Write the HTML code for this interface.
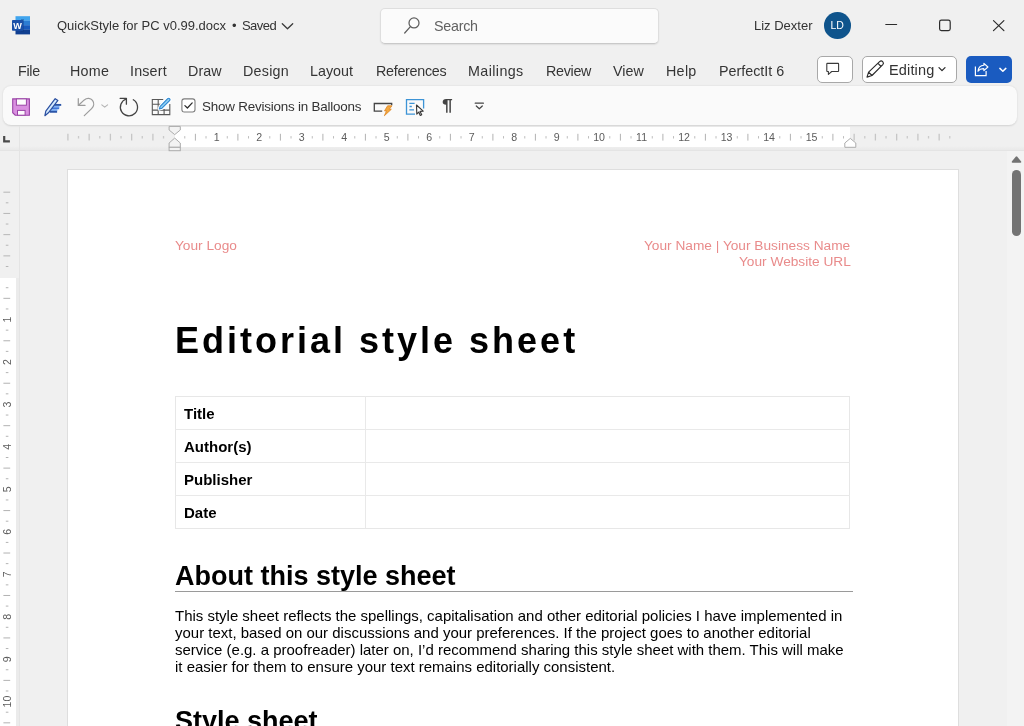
<!DOCTYPE html>
<html lang="en">
<head>
<meta charset="utf-8">
<title>QuickStyle for PC v0.99.docx - Word</title>
<style>
html,body{margin:0;padding:0;}
body>*{will-change:transform;}
body{width:1024px;height:726px;overflow:hidden;position:relative;background:#f0f0f0;font-family:"Liberation Sans",sans-serif;color:#242424;}
.abs{position:absolute;white-space:nowrap;line-height:1;}
svg{position:absolute;overflow:visible;}
/* title bar */
.ttl{font-size:13px;color:#333;}
.menu{font-size:14.3px;color:#353535;top:62.6px;height:16px;line-height:16px;}
#search{position:absolute;left:380px;top:8px;width:277px;height:34px;border:1px solid #dedede;border-bottom-color:#c9c9c9;border-radius:5px;background:#fbfbfb;box-shadow:0 1px 1.5px rgba(0,0,0,0.08);}
.btn{position:absolute;top:56px;height:24.5px;border:1px solid #a8a8a8;border-radius:5px;background:#fff;}
#share{position:absolute;left:966px;top:55.7px;width:46.3px;height:26.7px;border-radius:5px;background:#1a5bc0;}
#qat{position:absolute;left:3px;top:86px;width:1014px;height:38.5px;border-radius:8px;background:#fafafa;box-shadow:0 0.8px 2px rgba(0,0,0,0.13);}
/* rulers */
#rband{position:absolute;left:0;top:146px;width:1024px;height:5px;background:linear-gradient(#f0f0f0,#e7e7e7);}
#hruler{position:absolute;left:175px;top:127px;width:675px;height:20px;background:#fff;}
#vband{position:absolute;left:16px;top:278px;width:3px;height:448px;background:#ebebeb;}
#vruler{position:absolute;left:0;top:278px;width:16px;height:448px;background:#fff;}
#page{position:absolute;left:68px;top:170px;width:890px;height:556px;background:#fff;box-shadow:0 0 0 1px #dedede;}
#sbtrack{position:absolute;left:1007px;top:151px;width:17px;height:575px;background:#f3f3f3;}
#thumb{position:absolute;left:1012px;top:170px;width:9px;height:66px;border-radius:5px;background:#737373;}
/* document */
.doc{font-family:"Liberation Sans",sans-serif;color:#000;}
.hdr{font-size:13.7px;color:#e98b8b;}
#t1{left:175px;top:323px;font-size:36px;font-weight:700;letter-spacing:3px;}
.cell{font-size:15px;font-weight:700;left:183.5px;}
.h1{font-size:27px;font-weight:700;}
.body{font-size:14.97px;left:175px;}
.rn{font-size:10px;color:#666;}
</style>
</head>
<body>
<!-- TITLE BAR -->
<div class="abs ttl" style="left:57px;top:19.4px">QuickStyle for PC v0.99.docx</div>
<div class="abs ttl" style="left:232px;top:19.4px">•</div>
<div class="abs ttl" style="left:241.5px;top:19.4px;letter-spacing:-0.55px">Saved</div>
<svg style="left:281px;top:22px" width="13" height="9" viewBox="0 0 13 9"><path d="M1.3 1.8 L6.5 6.8 L11.7 1.8" fill="none" stroke="#3a3a3a" stroke-width="1.3" stroke-linecap="round" stroke-linejoin="round"/></svg>
<div id="search"></div>
<div class="abs" style="left:434px;top:18.5px;font-size:14.3px;color:#616161;letter-spacing:-0.25px">Search</div>
<div class="abs ttl" style="left:754.4px;top:19.4px">Liz Dexter</div>
<div class="abs" style="left:824px;top:12px;width:26.5px;height:26.5px;border-radius:50%;background:#0f548c"></div>
<div class="abs" style="left:824px;top:20px;width:26.5px;text-align:center;font-size:10.5px;color:#fff">LD</div>

<!-- word logo -->
<svg style="left:12px;top:16px" width="18" height="19" viewBox="0 0 18 19">
<rect x="3.5" y="0.2" width="14.5" height="4.6" fill="#41a5ee"/>
<rect x="3.5" y="4.7" width="14.5" height="4.6" fill="#2b7cd3"/>
<rect x="3.5" y="9.2" width="14.5" height="4.6" fill="#185abd"/>
<rect x="3.5" y="13.7" width="14.5" height="4.7" fill="#103f91"/>
<rect x="9" y="3" width="3" height="13" fill="#0d3578" opacity="0.35"/>
<rect x="0" y="3.9" width="11.2" height="10.8" rx="0.8" fill="#1b50a8"/>
<text transform="scale(0.92 1)" x="6.1" y="12.8" text-anchor="middle" font-family="Liberation Sans, sans-serif" font-weight="700" font-size="9.9" fill="#fff">W</text>
</svg>
<!-- search magnifier -->
<svg style="left:400px;top:14px" width="24" height="24" viewBox="0 0 24 24"><circle cx="14" cy="8.9" r="5" fill="none" stroke="#5e5e5e" stroke-width="1.25"/><path d="M10.4 12.6 L4.7 19" stroke="#5e5e5e" stroke-width="1.25" stroke-linecap="round"/></svg>
<!-- window controls -->
<svg style="left:880px;top:14px" width="130" height="22" viewBox="0 0 130 22">
<path d="M5.8 10.5 H16.6" stroke="#2b2b2b" stroke-width="1.2" stroke-linecap="round"/>
<rect x="59.6" y="6.2" width="10.6" height="10.4" rx="1.8" fill="none" stroke="#2b2b2b" stroke-width="1.2"/>
<path d="M113.5 6.6 L123.9 16.6 M123.9 6.6 L113.5 16.6" stroke="#2b2b2b" stroke-width="1.2" stroke-linecap="round"/>
</svg>
<!-- MENU -->
<div class="abs menu" style="left:17.9px;letter-spacing:-0.3px">File</div>
<div class="abs menu" style="left:70.0px;letter-spacing:0.25px">Home</div>
<div class="abs menu" style="left:130.0px;letter-spacing:0.18px">Insert</div>
<div class="abs menu" style="left:188.3px;letter-spacing:0.07px">Draw</div>
<div class="abs menu" style="left:243.2px;letter-spacing:0.25px">Design</div>
<div class="abs menu" style="left:310.0px;letter-spacing:0px">Layout</div>
<div class="abs menu" style="left:375.5px;letter-spacing:-0.27px">References</div>
<div class="abs menu" style="left:468.4px;letter-spacing:0.4px">Mailings</div>
<div class="abs menu" style="left:546.0px;letter-spacing:-0.3px">Review</div>
<div class="abs menu" style="left:613.4px;letter-spacing:0.07px">View</div>
<div class="abs menu" style="left:665.9px;letter-spacing:0.3px">Help</div>
<div class="abs menu" style="left:719.1px;letter-spacing:0px">PerfectIt 6</div>
<div class="btn" style="left:817px;width:34px"></div>
<div class="btn" style="left:862px;width:93px"></div>
<div class="abs" style="left:888.7px;top:62.5px;font-size:14.5px;color:#333;letter-spacing:0.15px">Editing</div>
<!-- comment / pencil / share icons -->
<svg style="left:824px;top:60px" width="20" height="20" viewBox="0 0 20 20"><path d="M3.3 3.4 H14.1 Q14.6 3.4 14.6 3.9 V11 Q14.6 11.5 14.1 11.5 H7.7 L4.4 14.4 V11.5 H3.3 Q2.8 11.5 2.8 11 V3.9 Q2.8 3.4 3.3 3.4 Z" fill="none" stroke="#3a3a3a" stroke-width="1.1" stroke-linejoin="round"/></svg>
<svg style="left:865px;top:59px" width="22" height="20" viewBox="0 0 22 20"><path d="M14.6 2.6 Q16.2 1.2 17.7 2.6 Q19.2 4.1 17.8 5.7 L7 16.5 L2 18.1 L3.6 13.1 Z M13 4.4 L16.1 7.5 M3.6 13.1 L7 16.5" fill="none" stroke="#2b2b2b" stroke-width="1.15" stroke-linejoin="round" stroke-linecap="round"/></svg>
<svg style="left:938px;top:66px" width="8" height="6" viewBox="0 0 8 6"><path d="M1 1.6 L4 4.6 L7 1.6" fill="none" stroke="#2b2b2b" stroke-width="1.3" stroke-linecap="round" stroke-linejoin="round"/></svg>
<div id="share"></div>
<svg style="left:973px;top:61px" width="18" height="17" viewBox="0 0 18 17"><path d="M2.4 6.1 V14.6 H13.1 V10.6" fill="none" stroke="#fff" stroke-width="1.2" stroke-linecap="square"/><path d="M10.9 2.3 L14.9 6 L10.9 9.7 V7.7 Q7 7.5 5 10.2 Q5.5 4.7 10.9 4.3 Z" fill="none" stroke="#fff" stroke-width="1.15" stroke-linejoin="round"/></svg>
<svg style="left:999px;top:66px" width="8" height="7" viewBox="0 0 8 7"><path d="M0.9 2.4 L3.85 5.2 L6.8 2.4" fill="none" stroke="#fff" stroke-width="1.5" stroke-linecap="round" stroke-linejoin="round"/></svg>

<!-- QAT -->
<div id="qat"></div>
<div class="abs" style="left:201.5px;top:99.9px;font-size:13.4px;color:#333;letter-spacing:-0.2px">Show Revisions in Balloons</div>

<!-- save -->
<svg style="left:12px;top:98px" width="18" height="18" viewBox="0 0 18 18">
<path d="M0.7 0.9 H17.4 V17.2 H3.2 L0.7 14.7 Z" fill="#d98fe0" stroke="#9a44a6" stroke-width="1.1" stroke-linejoin="miter"/>
<rect x="4.4" y="0.9" width="10" height="6.3" fill="#fdfbfd" stroke="#9a44a6" stroke-width="1"/>
<rect x="5.5" y="12.4" width="7.6" height="4.8" fill="#fdfbfd" stroke="#9a44a6" stroke-width="1"/>
</svg>
<!-- pen with lines -->
<svg style="left:44px;top:97px" width="19" height="20" viewBox="0 0 19 20">
<path d="M9 9.6 H15.5 M7 13.1 H13.4" stroke="#7fb2f5" stroke-width="1.6"/>
<path d="M10.2 7.9 H17.2" stroke="#2b55a8" stroke-width="1.9"/>
<path d="M8 11.3 H15.2" stroke="#3f76d8" stroke-width="1.9"/>
<path d="M5.8 14.8 H13.1" stroke="#2b55a8" stroke-width="1.9"/>
<path d="M11.2 1.7 L13.9 3.4 L4.4 15.8 L0.9 18.7 L1.8 14.1 Z" fill="#d4eaff" stroke="#2a4fa0" stroke-width="1.2" stroke-linejoin="round"/>
</svg>
<!-- undo (disabled) -->
<svg style="left:77px;top:97px" width="32" height="20" viewBox="0 0 32 20">
<path d="M1.3 1.7 V8.4 H8" fill="none" stroke="#9c9c9c" stroke-width="1.25" stroke-linecap="round" stroke-linejoin="round"/>
<path d="M1.5 8.2 L7.3 2.9 C10 0.7 13.6 1 15.5 3.4 C17.4 5.9 17 9.3 14.6 11.6 L7.3 18.6" fill="none" stroke="#9c9c9c" stroke-width="1.25" stroke-linecap="round" stroke-linejoin="round"/>
<path d="M24.8 7.8 L27.7 10.2 L30.6 7.8" fill="none" stroke="#b3b3b3" stroke-width="1.1" stroke-linecap="round" stroke-linejoin="round"/>
</svg>
<!-- repeat -->
<svg style="left:119px;top:97px" width="20" height="20" viewBox="0 0 20 20">
<path d="M1.1 1.3 H7.4 V7.2" fill="none" stroke="#444" stroke-width="1.3" stroke-linecap="round" stroke-linejoin="round"/>
<path d="M7.4 2 A8.6 8.6 0 1 0 14.3 2.8" fill="none" stroke="#444" stroke-width="1.3" stroke-linecap="round"/>
</svg>
<!-- table pen -->
<svg style="left:151px;top:97px" width="21" height="19" viewBox="0 0 21 19">
<path d="M12.2 2.5 H1.3 V17.6 H18.8 V7" fill="none" stroke="#585858" stroke-width="1.1"/>
<path d="M1.3 7.2 H9.6 M1.3 13.1 H18.8 M7.2 2.5 V17.6 M13.1 12 V17.6" fill="none" stroke="#585858" stroke-width="1.1"/>
<path d="M16.7 1.6 Q17.8 0.8 18.7 1.8 Q19.5 2.8 18.6 3.7 L11 11.2 L8.3 12 L9.2 9.4 Z" fill="#8fd0f5" stroke="#fff" stroke-width="3.2" stroke-linejoin="round"/>
<path d="M16.7 1.6 Q17.8 0.8 18.7 1.8 Q19.5 2.8 18.6 3.7 L11 11.2 L8.3 12 L9.2 9.4 Z" fill="#8fd0f5" stroke="#2e86d0" stroke-width="1.1" stroke-linejoin="round"/>
</svg>
<!-- checkbox -->
<svg style="left:181px;top:98px" width="15" height="15" viewBox="0 0 15 15">
<rect x="0.9" y="0.9" width="13.1" height="13.1" rx="2.4" fill="#fff" stroke="#7c7c7c" stroke-width="1.1"/>
<path d="M3.9 7.6 L6.4 10 L11.2 4.9" fill="none" stroke="#2b2b2b" stroke-width="1.25" stroke-linecap="round" stroke-linejoin="round"/>
</svg>
<!-- rect with lightning -->
<svg style="left:373px;top:102px" width="21" height="15" viewBox="0 0 21 15">
<path d="M9.2 9.2 H1.3 V1.5 H18.7 V3.3" fill="none" stroke="#444" stroke-width="1.3"/>
<path d="M14.6 3.8 H18.9 L16.3 7.3 H18.3 L11.4 13.7 L13.5 8.9 H11.5 Z" fill="#f3a840" stroke="#dd8420" stroke-width="0.8" stroke-linejoin="round"/>
</svg>
<!-- window with cursor -->
<svg style="left:405px;top:98px" width="21" height="19" viewBox="0 0 21 19">
<path d="M10 16.2 H1.5 V1.7 H18.6 V10.6" fill="none" stroke="#3d94d6" stroke-width="1.3"/>
<path d="M4.3 5.4 H9.6 M4.5 8.5 H6.8 M4.3 11.9 H9" stroke="#3d94d6" stroke-width="1.3"/>
<path d="M11.5 7 L18.2 13.1 L15.1 13.4 L16.7 16.7 L15.3 17.4 L13.7 14.1 L11.8 16.1 Z" fill="#fff" stroke="#3a3a3a" stroke-width="1.15" stroke-linejoin="round"/>
</svg>
<!-- customize qat -->
<svg style="left:474px;top:101px" width="11" height="10" viewBox="0 0 11 10">
<path d="M1.2 2.2 H9.4" stroke="#444" stroke-width="1.2" stroke-linecap="round"/>
<path d="M2.3 5 L5.3 7.8 L8.3 5" fill="none" stroke="#444" stroke-width="1.2" stroke-linecap="round" stroke-linejoin="round"/>
</svg>
<div class="abs" style="left:441.6px;top:98.4px;font-size:15.6px;color:#444;font-weight:700;transform:scaleX(1.24);transform-origin:0 0">¶</div>
<!-- RULERS -->
<div id="rband"></div>
<div id="hruler"></div>
<div id="vband"></div>
<div id="vruler"></div>
<div id="sbtrack"></div>
<div class="abs" style="left:0;top:150px;width:1024px;height:1px;background:#e4e4e4"></div>
<div class="abs" style="left:19px;top:126px;width:1px;height:600px;background:#e4e4e4"></div>
<!-- RULER-BEGIN -->
<svg style="left:0;top:126px" width="1024" height="26" viewBox="0 0 1024 26">
<path d="M195.40 7.8V14.6 M237.90 7.8V14.6 M280.40 7.8V14.6 M322.90 7.8V14.6 M365.40 7.8V14.6 M407.90 7.8V14.6 M450.40 7.8V14.6 M492.90 7.8V14.6 M535.40 7.8V14.6 M577.90 7.8V14.6 M620.40 7.8V14.6 M662.90 7.8V14.6 M705.40 7.8V14.6 M747.90 7.8V14.6 M790.40 7.8V14.6 M832.90 7.8V14.6" stroke="#b2b2b2" stroke-width="1"/>
<path d="M184.78 10.1V12.5 M206.03 10.1V12.5 M227.28 10.1V12.5 M248.53 10.1V12.5 M269.77 10.1V12.5 M291.02 10.1V12.5 M312.27 10.1V12.5 M333.52 10.1V12.5 M354.77 10.1V12.5 M376.02 10.1V12.5 M397.27 10.1V12.5 M418.52 10.1V12.5 M439.77 10.1V12.5 M461.02 10.1V12.5 M482.27 10.1V12.5 M503.52 10.1V12.5 M524.77 10.1V12.5 M546.02 10.1V12.5 M567.27 10.1V12.5 M588.52 10.1V12.5 M609.77 10.1V12.5 M631.02 10.1V12.5 M652.27 10.1V12.5 M673.52 10.1V12.5 M694.77 10.1V12.5 M716.02 10.1V12.5 M737.27 10.1V12.5 M758.52 10.1V12.5 M779.77 10.1V12.5 M801.02 10.1V12.5 M822.27 10.1V12.5 M843.52 10.1V12.5" stroke="#bdbdbd" stroke-width="1"/>
<path d="M152.90 7.8V14.6 M131.65 7.8V14.6 M110.40 7.8V14.6 M89.15 7.8V14.6 M67.90 7.8V14.6 M854.15 7.8V14.6 M875.40 7.8V14.6 M896.65 7.8V14.6 M917.90 7.8V14.6 M939.15 7.8V14.6" stroke="#c6c6c6" stroke-width="1.3"/>
<path d="M163.53 10.1V12.5 M142.28 10.1V12.5 M121.03 10.1V12.5 M99.78 10.1V12.5 M78.53 10.1V12.5 M864.77 10.1V12.5 M886.02 10.1V12.5 M907.27 10.1V12.5 M928.52 10.1V12.5 M949.77 10.1V12.5" stroke="#cacaca" stroke-width="1.3"/>
<text x="216.7" y="14.8" text-anchor="middle" font-family="Liberation Sans, sans-serif" font-size="10.6" fill="#5c5c5c">1</text>
<text x="259.1" y="14.8" text-anchor="middle" font-family="Liberation Sans, sans-serif" font-size="10.6" fill="#5c5c5c">2</text>
<text x="301.6" y="14.8" text-anchor="middle" font-family="Liberation Sans, sans-serif" font-size="10.6" fill="#5c5c5c">3</text>
<text x="344.1" y="14.8" text-anchor="middle" font-family="Liberation Sans, sans-serif" font-size="10.6" fill="#5c5c5c">4</text>
<text x="386.6" y="14.8" text-anchor="middle" font-family="Liberation Sans, sans-serif" font-size="10.6" fill="#5c5c5c">5</text>
<text x="429.1" y="14.8" text-anchor="middle" font-family="Liberation Sans, sans-serif" font-size="10.6" fill="#5c5c5c">6</text>
<text x="471.6" y="14.8" text-anchor="middle" font-family="Liberation Sans, sans-serif" font-size="10.6" fill="#5c5c5c">7</text>
<text x="514.1" y="14.8" text-anchor="middle" font-family="Liberation Sans, sans-serif" font-size="10.6" fill="#5c5c5c">8</text>
<text x="556.6" y="14.8" text-anchor="middle" font-family="Liberation Sans, sans-serif" font-size="10.6" fill="#5c5c5c">9</text>
<text x="599.1" y="14.8" text-anchor="middle" font-family="Liberation Sans, sans-serif" font-size="10.6" fill="#5c5c5c">10</text>
<text x="641.6" y="14.8" text-anchor="middle" font-family="Liberation Sans, sans-serif" font-size="10.6" fill="#5c5c5c">11</text>
<text x="684.1" y="14.8" text-anchor="middle" font-family="Liberation Sans, sans-serif" font-size="10.6" fill="#5c5c5c">12</text>
<text x="726.6" y="14.8" text-anchor="middle" font-family="Liberation Sans, sans-serif" font-size="10.6" fill="#5c5c5c">13</text>
<text x="769.1" y="14.8" text-anchor="middle" font-family="Liberation Sans, sans-serif" font-size="10.6" fill="#5c5c5c">14</text>
<text x="811.6" y="14.8" text-anchor="middle" font-family="Liberation Sans, sans-serif" font-size="10.6" fill="#5c5c5c">15</text>
<path d="M169.1 0.4 H180.29999999999998 V4 L174.7 8.6 L169.1 4 Z" fill="#f3f3f3" stroke="#ababab" stroke-width="1"/>
<path d="M169.1 21.3 V17 L174.7 12.1 L180.29999999999998 17 V21.3 Z" fill="#f3f3f3" stroke="#ababab" stroke-width="1"/>
<rect x="169.1" y="21.3" width="11.2" height="3.4" fill="#f3f3f3" stroke="#ababab" stroke-width="1"/>
<path d="M844.8 21.3 V17 L850.3 12.4 L855.8 17 V21.3 Z" fill="#fff" stroke="#ababab" stroke-width="1"/>
<path d="M4.2 9.9 V15.4 H9.9" fill="none" stroke="#4a4a4a" stroke-width="2.2"/>
</svg>
<svg style="left:0;top:0" width="20" height="726" viewBox="0 0 20 726">
<path d="M3.4 298.33H10.2 M3.4 340.78H10.2 M3.4 383.23H10.2 M3.4 425.68H10.2 M3.4 468.12H10.2 M3.4 510.58H10.2 M3.4 553.03H10.2 M3.4 595.48H10.2 M3.4 637.93H10.2 M3.4 680.38H10.2 M3.4 722.83H10.2" stroke="#b2b2b2" stroke-width="1"/>
<path d="M5.8 287.71H8.4 M5.8 308.94H8.4 M5.8 330.16H8.4 M5.8 351.39H8.4 M5.8 372.61H8.4 M5.8 393.84H8.4 M5.8 415.06H8.4 M5.8 436.29H8.4 M5.8 457.51H8.4 M5.8 478.74H8.4 M5.8 499.96H8.4 M5.8 521.19H8.4 M5.8 542.41H8.4 M5.8 563.64H8.4 M5.8 584.86H8.4 M5.8 606.09H8.4 M5.8 627.31H8.4 M5.8 648.54H8.4 M5.8 669.76H8.4 M5.8 690.99H8.4 M5.8 712.21H8.4" stroke="#b4b4b4" stroke-width="1"/>
<path d="M3.4 255.88H10.2 M3.4 234.65H10.2 M3.4 213.43H10.2 M3.4 192.20H10.2" stroke="#b6b6b6" stroke-width="1"/>
<path d="M5.8 266.49H8.4 M5.8 245.26H8.4 M5.8 224.04H8.4 M5.8 202.81H8.4" stroke="#b6b6b6" stroke-width="1"/>
<text transform="translate(10.6 319.6) rotate(-90)" text-anchor="middle" font-family="Liberation Sans, sans-serif" font-size="10.6" fill="#5c5c5c">1</text>
<text transform="translate(10.6 362.0) rotate(-90)" text-anchor="middle" font-family="Liberation Sans, sans-serif" font-size="10.6" fill="#5c5c5c">2</text>
<text transform="translate(10.6 404.5) rotate(-90)" text-anchor="middle" font-family="Liberation Sans, sans-serif" font-size="10.6" fill="#5c5c5c">3</text>
<text transform="translate(10.6 446.9) rotate(-90)" text-anchor="middle" font-family="Liberation Sans, sans-serif" font-size="10.6" fill="#5c5c5c">4</text>
<text transform="translate(10.6 489.4) rotate(-90)" text-anchor="middle" font-family="Liberation Sans, sans-serif" font-size="10.6" fill="#5c5c5c">5</text>
<text transform="translate(10.6 531.8) rotate(-90)" text-anchor="middle" font-family="Liberation Sans, sans-serif" font-size="10.6" fill="#5c5c5c">6</text>
<text transform="translate(10.6 574.2) rotate(-90)" text-anchor="middle" font-family="Liberation Sans, sans-serif" font-size="10.6" fill="#5c5c5c">7</text>
<text transform="translate(10.6 616.7) rotate(-90)" text-anchor="middle" font-family="Liberation Sans, sans-serif" font-size="10.6" fill="#5c5c5c">8</text>
<text transform="translate(10.6 659.2) rotate(-90)" text-anchor="middle" font-family="Liberation Sans, sans-serif" font-size="10.6" fill="#5c5c5c">9</text>
<text transform="translate(10.6 701.6) rotate(-90)" text-anchor="middle" font-family="Liberation Sans, sans-serif" font-size="10.6" fill="#5c5c5c">10</text>
</svg>
<!-- RULER-END -->
<svg style="left:1010px;top:154px" width="13" height="10" viewBox="0 0 13 10"><path d="M6.5 2.2 Q6.9 2.2 7.3 2.7 L11.2 7.6 Q11.7 8.6 10.6 8.8 H2.4 Q1.3 8.6 1.8 7.6 L5.7 2.7 Q6.1 2.2 6.5 2.2Z" fill="#727272"/></svg>
<div id="thumb"></div>

<!-- PAGE -->
<div id="page"></div>
<div class="abs doc hdr" style="left:175px;top:239.4px">Your Logo</div>
<div class="abs doc hdr" style="right:173.6px;top:239.4px">Your Name | Your Business Name</div>
<div class="abs doc hdr" style="right:173.6px;top:255px">Your Website URL</div>
<div class="abs doc" id="t1">Editorial style sheet</div>
<!-- table -->
<div class="abs" style="left:175px;top:396px;width:675px;height:133px;border:1px solid #e7e7e7;box-sizing:border-box"></div>
<div class="abs" style="left:175px;top:429px;width:675px;height:1px;background:#e9e9e9"></div>
<div class="abs" style="left:175px;top:462px;width:675px;height:1px;background:#e9e9e9"></div>
<div class="abs" style="left:175px;top:495px;width:675px;height:1px;background:#e9e9e9"></div>
<div class="abs" style="left:365px;top:396px;width:1px;height:132px;background:#e9e9e9"></div>
<div class="abs" style="left:175px;top:591px;width:678px;height:1px;background:#9a9a9a"></div>
<div class="abs doc cell" style="top:406px">Title</div>
<div class="abs doc cell" style="top:439px">Author(s)</div>
<div class="abs doc cell" style="top:472px">Publisher</div>
<div class="abs doc cell" style="top:505px">Date</div>
<div class="abs doc h1" style="left:175px;top:562.5px">About this style sheet</div>
<div class="abs doc body" style="top:608.8px">This style sheet reflects the spellings, capitalisation and other editorial policies I have implemented in</div>
<div class="abs doc body" style="top:625.8px">your text, based on our discussions and your preferences. If the project goes to another editorial</div>
<div class="abs doc body" style="top:642.8px">service (e.g. a proofreader) later on, I’d recommend sharing this style sheet with them. This will make</div>
<div class="abs doc body" style="top:659.8px">it easier for them to ensure your text remains editorially consistent.</div>
<div class="abs doc h1" style="left:175px;top:708px">Style sheet</div>
</body>
</html>
